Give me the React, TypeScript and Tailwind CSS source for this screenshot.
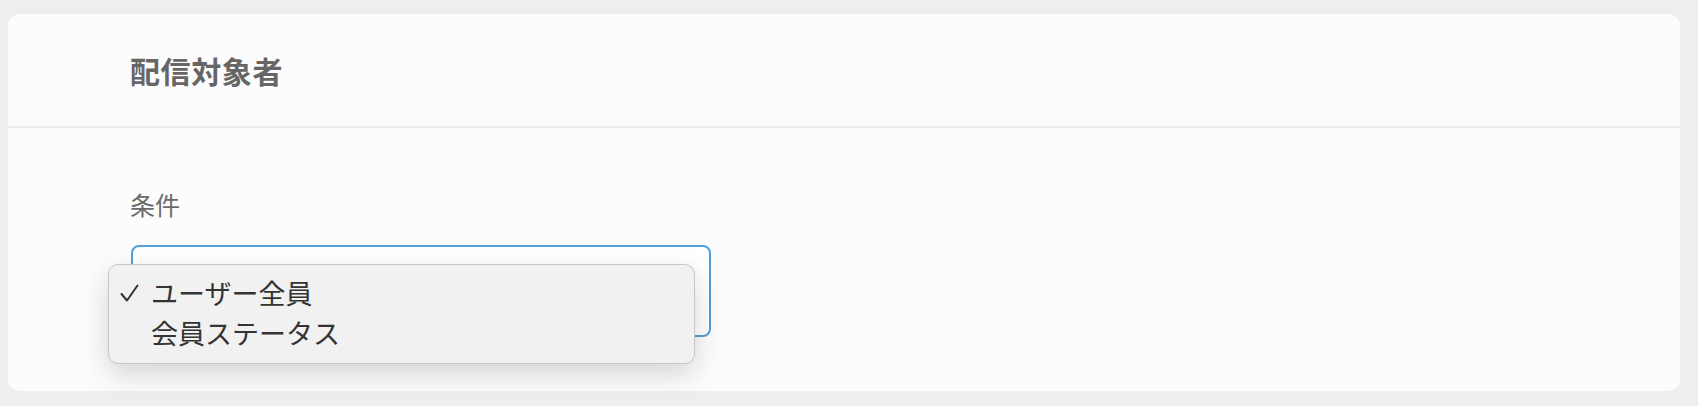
import React from "react";

export default function App() {
  const font = { fontFamily: '"Noto Sans CJK JP", "Noto Sans", sans-serif' };
  return (
    <div className="w-[1698px] h-[406px] bg-[#eeeeee] pt-[14px] pl-[8px]" style={font}>
      <div className="relative w-[1672px] h-[377px] bg-[#fcfcfc] rounded-[12px]">
        <div className="h-[112px] flex items-center pl-[122px]">
          <h1 className="text-[30px] font-bold text-[#666666] leading-none tracking-[0.6px]">配信対象者</h1>
        </div>
        <div className="h-[2px] bg-[#ebebeb]" />
        <div className="pl-[122px] pt-[58px]">
          <div className="text-[25px] leading-[36px] text-[#6a6a6a]">条件</div>
          <div className="mt-[23px] ml-[1px] w-[580px] h-[92px] border-2 border-[#4f9fd9] rounded-[8px] bg-white" />
        </div>
        <div className="absolute left-[100px] top-[250px] w-[587px] h-[100px] bg-[#f1f1f1] border border-[#c6c6c6] rounded-[10px] shadow-[0_10px_28px_rgba(0,0,0,0.16)] pt-[8px] text-[#333333]">
          <div className="flex items-center h-[40px] text-[27px] leading-[40px]">
            <span className="w-[42px] flex justify-end pr-[12px]">
              <svg width="19" height="18" viewBox="0 0 19 18" fill="none">
                <path d="M1.5 10 L7 16.5 L17.5 1.5" stroke="#333333" strokeWidth="2" strokeLinecap="round" strokeLinejoin="round" />
              </svg>
            </span>
            <span>ユーザー全員</span>
          </div>
          <div className="flex items-center h-[40px] text-[27px] leading-[40px]">
            <span className="w-[42px]" />
            <span>会員ステータス</span>
          </div>
        </div>
      </div>
    </div>
  );
}
